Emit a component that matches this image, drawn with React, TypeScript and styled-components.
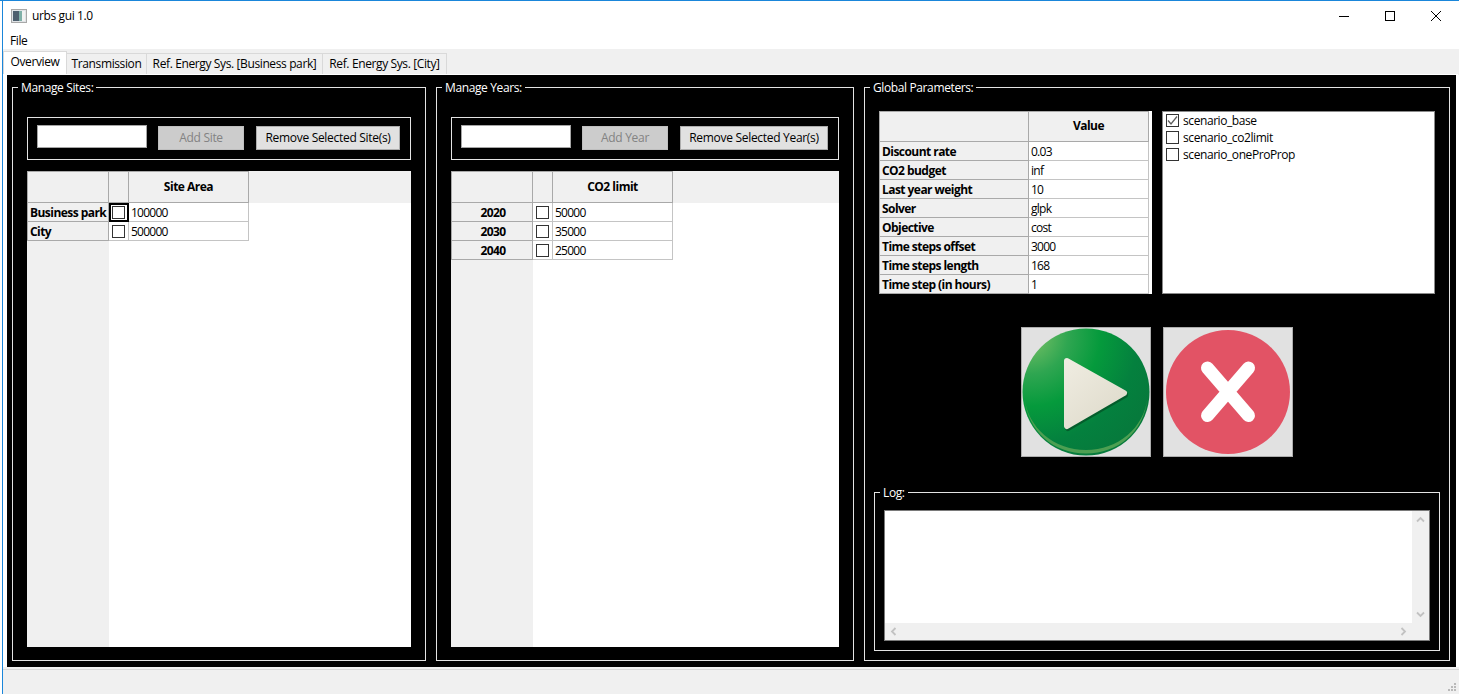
import React from "react";
import styled, { createGlobalStyle } from "styled-components";

const Global = createGlobalStyle`
  html, body { margin: 0; padding: 0; height: 100%; background: #fff; overflow: hidden; }
  * { box-sizing: border-box; }
  #root { height: 100%; }
`;

const Frame = styled.div`
  width: 1459px; height: 694px; overflow: hidden;
  padding-left: 2px; background: #fff;
  font-family: "Open Sans", "Noto Sans", "Liberation Sans", sans-serif;
  font-size: 12px; letter-spacing: -0.38px; color: #000;
`;
const Win = styled.div`
  height: 100%; display: flex; flex-direction: column;
  border-left: 1px solid #1a86da; border-top: 1px solid #1a86da; margin-left: 0;
  position: relative;
`;
const TopEdge = styled.div`
  position: absolute; top: -1px; left: -3px; width: 3px; height: 1px; background: #1a86da;
`;
const TitleBar = styled.div`
  height: 32px; display: flex; align-items: center; background: #fff; padding-left: 8px;
`;
const TitleText = styled.span`
  margin-left: 5px; line-height: 16px; padding-bottom: 2px;
`;
const WinControls = styled.div`
  margin-left: auto; display: flex; align-self: stretch;
`;
const WinButton = styled.div`
  width: 46px; display: flex; align-items: center; justify-content: center; padding-bottom: 2px;
`;
const MenuBar = styled.div`
  height: 16px; background: #fff; padding-left: 7px; display: flex; align-items: center;
`;
const MenuItem = styled.span`
  line-height: 16px;
`;
const TabBar = styled.div`
  height: 26px; background: #f0f0f0; display: flex; align-items: flex-end; flex: none;
`;
const Tab = styled.div<{ $w: number; $active?: boolean }>`
  width: ${(p) => p.$w}px;
  height: ${(p) => (p.$active ? 24 : 21)}px;
  margin-bottom: ${(p) => (p.$active ? 0 : 1)}px;
  background: ${(p) => (p.$active ? "#fff" : "#f0f0f0")};
  border: 1px solid #d9d9d9;
  border-left: ${(p) => (p.$active ? "1px solid #d9d9d9" : "none")};
  border-bottom: none;
  display: flex; align-items: center; justify-content: center;
  padding-bottom: ${(p) => (p.$active ? 5 : 2)}px;
`;
const Pane = styled.div`
  flex: 1; min-height: 0; background: #000;
  border-left: 4px solid #fff; border-right: 2px solid #fff; border-bottom: 2px solid #fff; border-top: 1px solid #fff;
  margin-right: 1px; margin-top: -1px;
  padding: 4px 6px 6px 5px;
  display: grid; grid-template-columns: 414px 418px 586px; gap: 10px;
`;
const StatusBar = styled.div`
  height: 25px; flex: none; background: #f0f0f0; border-top: 1px solid #d7d7d7;
  box-shadow: 0 -2px 0 #f0f0f0;
  display: flex; justify-content: flex-end; align-items: flex-end; padding: 0 2px 2px 0;
`;
const GroupBox = styled.fieldset`
  margin: 0; padding: 0; min-width: 0; min-height: 0;
  border: 1px solid #e3e3e3; display: flex; flex-direction: column;
`;
const GroupTitle = styled.legend`
  margin-left: 5px; padding: 2px 3px 0; height: 16px; color: #fff; line-height: 14px; font-size: 12px;
`;
const ListBody = styled.div`
  flex: 1; min-height: 0; display: flex; flex-direction: column; padding: 22px 14px 13px 14px;
`;
const Toolbar = styled.div`
  height: 43px; flex: none; border: 1px solid #e3e3e3; display: flex; align-items: flex-start;
  padding: 7px 9px; margin-bottom: 11px;
`;
const NameInput = styled.div`
  width: 110px; height: 23px; background: #fff; border: 1px solid #a5a5a5; flex: none;
`;
const PushButton = styled.div<{ $w: number; $disabled?: boolean }>`
  width: ${(p) => p.$w}px; height: 24px; flex: none; margin-top: 1px;
  margin-left: ${(p) => (p.$disabled ? 11 : 12)}px; padding-bottom: 1px; letter-spacing: -0.3px;
  display: flex; align-items: center; justify-content: center; white-space: nowrap;
  background: ${(p) => (p.$disabled ? "#cccccc" : "#e1e1e1")};
  border: 1px solid ${(p) => (p.$disabled ? "#bfbfbf" : "#adadad")};
  color: ${(p) => (p.$disabled ? "#838383" : "#000")};
`;
const DataGrid = styled.div<{ $rows: number }>`
  flex: 1; min-height: 0; background: #fff; display: grid;
  grid-template-columns: 82px 20px 120px 1fr;
  grid-template-rows: 32px repeat(${(p) => p.$rows}, 19px) 1fr;
`;
const HeadCell = styled.div<{ $first?: boolean }>`
  background: #f0f0f0; border: 1px solid #a9a9a9; border-left-width: ${(p) => (p.$first ? 1 : 0)}px;
  display: flex; align-items: center; justify-content: center; font-weight: 700;
  letter-spacing: -0.5px; padding-bottom: 2px;
`;
const HeadFill = styled.div`
  background: #f0f0f0;
`;
const RowHead = styled.div<{ $center?: boolean }>`
  background: #f0f0f0; border: 1px solid #a9a9a9; border-top: none;
  display: flex; align-items: center; font-weight: 700; white-space: nowrap; padding-left: 2px;
  letter-spacing: -0.55px;
  justify-content: ${(p) => (p.$center ? "center" : "flex-start")};
`;
const Cell = styled.div`
  border-right: 1px solid #c4c4c4; border-bottom: 1px solid #c4c4c4;
  display: flex; align-items: center; padding-left: 2px; background: #fff; white-space: nowrap;
  letter-spacing: -0.75px;
`;
const CheckCell = styled.div<{ $focus?: boolean }>`
  border-right: 1px solid #c4c4c4; border-bottom: 1px solid #c4c4c4;
  outline: ${(p) => (p.$focus ? "2px solid #000" : "none")}; outline-offset: -2px;
  display: flex; align-items: center; justify-content: center; background: #fff;
`;
const CheckBox = styled.div`
  width: 13px; height: 13px; flex: none; background: #fff; border: 1px solid #333;
  display: flex; align-items: center; justify-content: center;
`;
const LeftFill = styled.div`
  grid-column: 1; background: #f0f0f0;
`;
const GlobalBody = styled.div`
  flex: 1; min-height: 0; display: flex; flex-direction: column; padding: 16px 9px 9px 9px;
`;
const ParamRow = styled.div`
  display: grid; grid-template-columns: 1fr 1fr; gap: 10px; margin: 0 5px 0 5px; height: 183px; flex: none;
`;
const ParamGrid = styled.div`
  background: #fff; display: grid; grid-template-columns: 150px 120px 1fr;
  grid-template-rows: 31px repeat(8, 19px);
`;
const ParamHeadFill = styled.div`
  background: #fff; grid-row: 1 / span 9; grid-column: 3;
`;
const ScenarioList = styled.div`
  background: #fff; border: 1px solid #8a8a8a; padding: 0 3px;
`;
const ScenarioItem = styled.div`
  height: 17px; display: flex; align-items: center; gap: 4px; letter-spacing: -0.42px;
`;
const RunRow = styled.div`
  display: flex; justify-content: center; gap: 12px; margin-top: 33px; flex: none; padding-right: 1px;
`;
const IconButton = styled.div`
  width: 130px; height: 130px; background: #e1e1e1; border: 1px solid #adadad; flex: none;
  display: flex; align-items: center; justify-content: center;
`;
const LogGroup = styled(GroupBox)`
  flex: 1; margin-top: 27px;
`;
const LogBody = styled.div`
  flex: 1; min-height: 0; display: flex; padding: 10px 9px 9px 9px;
`;
const LogBox = styled.div`
  flex: 1; border: 1px solid #7a7a7a; background: #fff; display: grid;
  grid-template-columns: 1fr 17px; grid-template-rows: 1fr 17px;
`;
const LogText = styled.div`
  background: #fff;
`;
const VScroll = styled.div`
  background: #f0f0f0; display: flex; flex-direction: column; justify-content: space-between;
`;
const HScroll = styled.div`
  background: #f0f0f0; display: flex; justify-content: space-between;
`;
const ScrollEnd = styled.div`
  width: 17px; height: 17px; display: flex; align-items: center; justify-content: center;
`;
const Corner = styled.div`
  background: #f0f0f0;
`;

const Check = () => (
  <svg width="11" height="11" viewBox="0 0 11 11">
    <path d="M1 5.5 L4 9 L10 1.5" fill="none" stroke="#5f5f5f" strokeWidth="1.3" />
  </svg>
);

const Chevron = ({ dir }: { dir: "up" | "down" | "left" | "right" }) => {
  const rot = { up: 0, right: 90, down: 180, left: 270 }[dir];
  return (
    <svg width="9" height="9" viewBox="0 0 9 9" style={{ transform: `rotate(${rot}deg)` }}>
      <path d="M1 6.5 L4.5 3 L8 6.5" fill="none" stroke="#c2c2c2" strokeWidth="1.8" />
    </svg>
  );
};

const AppIcon = () => (
  <svg width="16" height="14" viewBox="0 0 16 14" style={{ marginBottom: 2 }}>
    <rect x="0.5" y="0.5" width="15" height="13" fill="#dfe3e6" stroke="#a8a8a8" />
    <rect x="2" y="2" width="6" height="10" fill="#4d5f6e" />
    <rect x="8" y="2" width="3" height="10" fill="#7fb0a8" />
    <rect x="11" y="2" width="3" height="10" fill="#f2f2f2" />
  </svg>
);

const PlayIcon = () => (
  <svg width="128" height="128" viewBox="0 0 128 128">
    <defs>
      <radialGradient id="playFill" gradientUnits="userSpaceOnUse" cx="8" cy="8" r="135">
        <stop offset="0" stopColor="#7cc267" />
        <stop offset="0.28" stopColor="#2fa651" />
        <stop offset="0.52" stopColor="#059a3c" />
        <stop offset="0.8" stopColor="#04803e" />
        <stop offset="1" stopColor="#067a3c" />
      </radialGradient>
      <linearGradient id="playTri" gradientUnits="userSpaceOnUse" x1="42" y1="30" x2="105" y2="100">
        <stop offset="0" stopColor="#f0ede2" />
        <stop offset="1" stopColor="#dcd8c8" />
      </linearGradient>
    </defs>
    <circle cx="64" cy="64" r="63.5" fill="url(#playFill)" />
    <path d="M2.5 70 C6 100 32 122 64 122 C96 122 122 100 125.5 70 C122 104 96 125.5 64 125.5 C32 125.5 6 104 2.5 70 Z" fill="#4d9f52" />
    <path d="M46 35 L103 67 L46 100 Z" fill="#045d2c" stroke="#045d2c" strokeWidth="6" strokeLinejoin="round" />
    <path d="M45 33 L102 65 L45 98 Z" fill="url(#playTri)" stroke="url(#playTri)" strokeWidth="6" strokeLinejoin="round" />
  </svg>
);

const StopIcon = () => (
  <svg width="128" height="128" viewBox="0 0 128 128">
    <circle cx="64" cy="64" r="62" fill="#e25365" />
    <path d="M43.5 40 L84.5 87.5 M84.5 40 L43.5 87.5" fill="none" stroke="#fff" strokeWidth="13" strokeLinecap="round" />
  </svg>
);

const Grip = () => (
  <svg width="9" height="9" viewBox="0 0 9 9">
    <path d="M6 0h2v2h-2z M3 3h2v2h-2z M6 3h2v2h-2z M0 6h2v2h-2z M3 6h2v2h-2z M6 6h2v2h-2z" fill="#b9b9b9" />
  </svg>
);

type Row = { name: string; value: string; focus?: boolean };

const DataTable = ({ column, rows, center }: { column: string; rows: Row[]; center?: boolean }) => (
  <DataGrid $rows={rows.length}>
    <HeadCell $first />
    <HeadCell />
    <HeadCell>{column}</HeadCell>
    <HeadFill />
    {rows.map((r) => (
      <React.Fragment key={r.name}>
        <RowHead $center={center}>{r.name}</RowHead>
        <CheckCell $focus={r.focus}>
          <CheckBox />
        </CheckCell>
        <Cell>{r.value}</Cell>
        <div />
      </React.Fragment>
    ))}
    <LeftFill />
  </DataGrid>
);

const params = [
  ["Discount rate", "0.03"],
  ["CO2 budget", "inf"],
  ["Last year weight", "10"],
  ["Solver", "glpk"],
  ["Objective", "cost"],
  ["Time steps offset", "3000"],
  ["Time steps length", "168"],
  ["Time step (in hours)", "1"],
];

export default function App() {
  return (
    <Frame>
      <Global />
      <Win>
        <TopEdge />
        <TitleBar>
          <AppIcon />
          <TitleText>urbs gui 1.0</TitleText>
          <WinControls>
            <WinButton>
              <svg width="10" height="10" viewBox="0 0 10 10">
                <path d="M0 5.5H10" stroke="#000" strokeWidth="1" />
              </svg>
            </WinButton>
            <WinButton>
              <svg width="10" height="10" viewBox="0 0 10 10">
                <rect x="0.5" y="0.5" width="9" height="9" fill="none" stroke="#000" />
              </svg>
            </WinButton>
            <WinButton>
              <svg width="10" height="10" viewBox="0 0 10 10">
                <path d="M0 0L10 10M10 0L0 10" stroke="#000" strokeWidth="1" />
              </svg>
            </WinButton>
          </WinControls>
        </TitleBar>
        <MenuBar>
          <MenuItem>File</MenuItem>
        </MenuBar>
        <TabBar>
          <Tab $w={64} $active>Overview</Tab>
          <Tab $w={80}>Transmission</Tab>
          <Tab $w={176}>Ref. Energy Sys. [Business park]</Tab>
          <Tab $w={124}>Ref. Energy Sys. [City]</Tab>
        </TabBar>
        <Pane>
          <GroupBox>
            <GroupTitle>Manage Sites:</GroupTitle>
            <ListBody>
              <Toolbar>
                <NameInput />
                <PushButton $w={86} $disabled>Add Site</PushButton>
                <PushButton $w={144}>Remove Selected Site(s)</PushButton>
              </Toolbar>
              <DataTable
                column="Site Area"
                rows={[
                  { name: "Business park", value: "100000", focus: true },
                  { name: "City", value: "500000" },
                ]}
              />
            </ListBody>
          </GroupBox>
          <GroupBox>
            <GroupTitle>Manage Years:</GroupTitle>
            <ListBody>
              <Toolbar>
                <NameInput />
                <PushButton $w={86} $disabled>Add Year</PushButton>
                <PushButton $w={148}>Remove Selected Year(s)</PushButton>
              </Toolbar>
              <DataTable
                center
                column="CO2 limit"
                rows={[
                  { name: "2020", value: "50000" },
                  { name: "2030", value: "35000" },
                  { name: "2040", value: "25000" },
                ]}
              />
            </ListBody>
          </GroupBox>
          <GroupBox>
            <GroupTitle>Global Parameters:</GroupTitle>
            <GlobalBody>
              <ParamRow>
                <ParamGrid>
                  <HeadCell $first />
                  <HeadCell>Value</HeadCell>
                  <ParamHeadFill />
                  {params.map(([k, v]) => (
                    <React.Fragment key={k}>
                      <RowHead>{k}</RowHead>
                      <Cell>{v}</Cell>
                    </React.Fragment>
                  ))}
                </ParamGrid>
                <ScenarioList>
                  <ScenarioItem>
                    <CheckBox><Check /></CheckBox>
                    scenario_base
                  </ScenarioItem>
                  <ScenarioItem>
                    <CheckBox />
                    scenario_co2limit
                  </ScenarioItem>
                  <ScenarioItem>
                    <CheckBox />
                    scenario_oneProProp
                  </ScenarioItem>
                </ScenarioList>
              </ParamRow>
              <RunRow>
                <IconButton><PlayIcon /></IconButton>
                <IconButton><StopIcon /></IconButton>
              </RunRow>
              <LogGroup>
                <GroupTitle>Log:</GroupTitle>
                <LogBody>
                  <LogBox>
                    <LogText />
                    <VScroll>
                      <ScrollEnd><Chevron dir="up" /></ScrollEnd>
                      <ScrollEnd><Chevron dir="down" /></ScrollEnd>
                    </VScroll>
                    <HScroll>
                      <ScrollEnd><Chevron dir="left" /></ScrollEnd>
                      <ScrollEnd><Chevron dir="right" /></ScrollEnd>
                    </HScroll>
                    <Corner />
                  </LogBox>
                </LogBody>
              </LogGroup>
            </GlobalBody>
          </GroupBox>
        </Pane>
        <StatusBar>
          <Grip />
        </StatusBar>
      </Win>
    </Frame>
  );
}
